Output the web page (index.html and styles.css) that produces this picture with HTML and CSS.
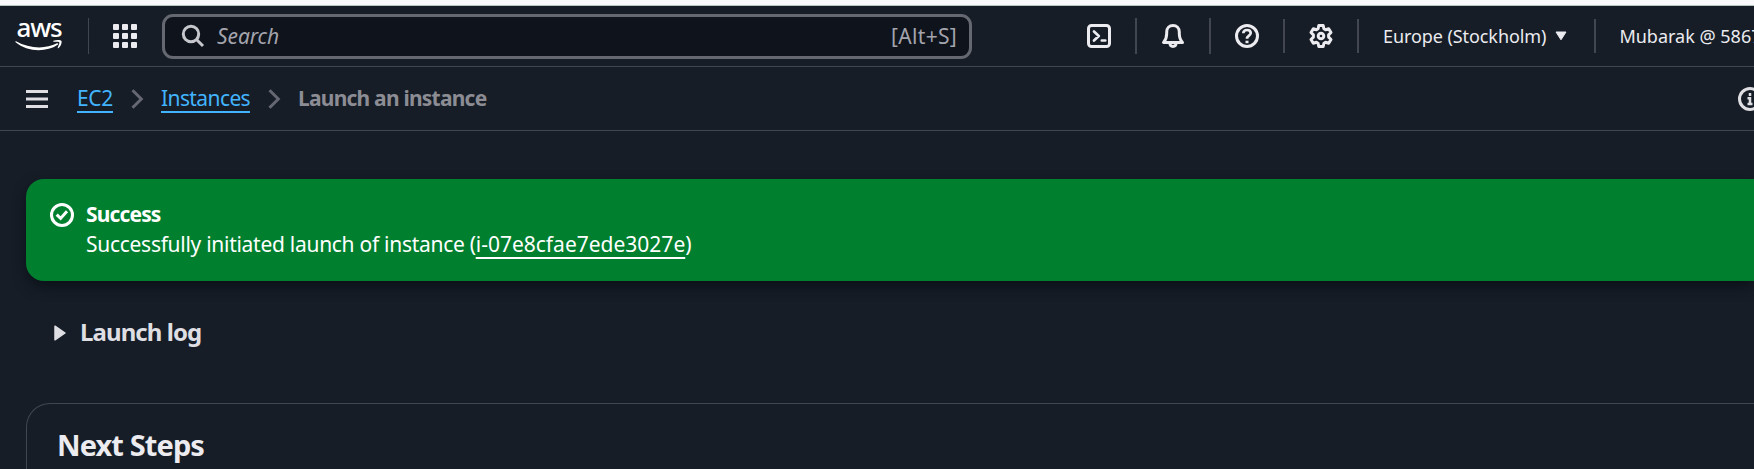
FILE: index.html
```html
<!DOCTYPE html>
<html lang="en">
<head>
<meta charset="utf-8">
<title>Launch an instance | EC2</title>
<link rel="stylesheet" href="styles.css">
</head>
<body>
<div class="browser-edge"></div>
<header class="topnav">
  <a class="logo" aria-label="AWS"><span class="logo-text">aws</span>
    <svg class="logo-smile" width="48" height="12" viewBox="0 0 48 12"><path d="M1 1.200C14 8.500 30 9.500 42 3.300C43.200 2.900 43.700 4 42.700 4.800C31 12.800 12 12 .600 2.300C0 1.600.400 .900 1 1.200Z" fill="#fff"/><path d="M38.500 .800C41 -.200 45.500 -.200 46.500 .900C47.100 3 45.500 6.500 43.300 8.300C42.700 8.500 42.500 8.200 42.800 7.500C43.700 5.300 44.800 3 44.200 2.200C43.400 1.500 40.700 1.700 38.700 1.800C38 1.800 38 1.100 38.500 .800Z" fill="#fff"/></svg>
  </a>
  <span class="rule rule-logo"></span>
  <svg class="apps" width="24" height="24" viewBox="0 0 24 24" fill="#ebebf0"><rect width="6" height="6" rx="1"/><rect x="9" width="6" height="6" rx="1"/><rect x="18" width="6" height="6" rx="1"/><rect y="9" width="6" height="6" rx="1"/><rect x="9" y="9" width="6" height="6" rx="1"/><rect x="18" y="9" width="6" height="6" rx="1"/><rect y="18" width="6" height="6" rx="1"/><rect x="9" y="18" width="6" height="6" rx="1"/><rect x="18" y="18" width="6" height="6" rx="1"/></svg>
  <div class="search">
    <svg width="24" height="24" viewBox="0 0 24 24" fill="none" stroke="#c6c6cd" stroke-width="3"><circle cx="10" cy="10" r="7.700"/><path d="M15.500 15.500L22 22"/></svg>
    <span class="search-hint">Search</span><span class="search-key">[Alt+S]</span>
  </div>
  <div class="tools">
    <span class="tool"><svg class="ico" width="24" height="24" viewBox="0 0 24 24"><rect x="1.500" y="1.500" width="21" height="21" rx="3"/><path d="M7 7.500L11.800 12L7 16.500M14.800 16.500H18.300" stroke-linecap="round" stroke-linejoin="round" stroke-width="2.700"/></svg></span>
    <span class="rule"></span>
    <span class="tool"><svg class="ico" width="24" height="24" viewBox="0 0 24 24"><path d="M2.500 18.500H21.500C19.200 16 18.300 13.500 18.300 9.500V8C18.300 4.200 15.700 1.500 12 1.500S5.700 4.200 5.700 8V9.500C5.700 13.500 4.800 16 2.500 18.500Z" stroke-linejoin="round"/><path d="M8.800 19C9 21.500 10.300 22.500 12 22.500S15 21.500 15.200 19"/></svg></span>
    <span class="rule"></span>
    <span class="tool"><svg class="ico" width="24" height="24" viewBox="0 0 24 24"><circle cx="12" cy="12" r="10.500"/><path d="M8.300 9.300C8.400 7.300 9.900 6 12 6S15.700 7.200 15.700 9.100C15.700 11.700 12 11.700 12 14.800" stroke-width="2.700"/><path d="M12 16.700V19.200"/></svg></span>
    <span class="rule short"></span>
    <span class="tool"><svg class="ico" width="24" height="24" viewBox="0 0 24 24"><path d="M9.800 1.500H14.200L14.900 4.700L16.600 5.700L19.700 4.700L22 8.500L19.600 10.900V13.100L22 15.500L19.700 19.300L16.600 18.300L14.900 19.300L14.200 22.500H9.800L9.100 19.300L7.400 18.300L4.300 19.300L2 15.500L4.400 13.100V10.900L2 8.500L4.300 4.700L7.400 5.700L9.100 4.700Z" stroke-linejoin="round"/><circle cx="12" cy="12" r="2.800"/></svg></span>
    <span class="rule short"></span>
    <span class="region">Europe (Stockholm)<svg width="12" height="10" viewBox="0 0 12 10"><path d="M1 1H11L6 8.800Z" fill="#ebebf0" stroke="#ebebf0" stroke-linejoin="round"/></svg></span>
    <span class="rule short"></span>
    <span class="account">Mubarak @ 5867</span>
  </div>
</header>
<nav class="crumbs">
  <svg class="menu" width="22" height="18" viewBox="0 0 22 18" fill="#dedee3"><path d="M0 0H22V3H0ZM0 7.500H22V10.500H0ZM0 15H22V18H0Z"/></svg>
  <a class="crumb crumb-ec2">EC2</a>
  <svg class="chev" width="13" height="20" viewBox="0 0 13 20"><path d="M1.500 1.200L10.300 10L1.500 18.800"/></svg>
  <a class="crumb crumb-inst">Instances</a>
  <svg class="chev" width="13" height="20" viewBox="0 0 13 20"><path d="M1.500 1.200L10.300 10L1.500 18.800"/></svg>
  <span class="current">Launch an instance</span>
  <svg class="info" width="24" height="24" viewBox="0 0 24 24"><circle cx="12" cy="12" r="10.500"/><path d="M12 6V9M9.500 11.300H12V17M9.500 17H14.500" stroke-width="2.500"/></svg>
</nav>
<main class="content">
  <section class="flash">
    <svg width="24" height="24" viewBox="0 0 24 24" fill="none" stroke="#fff" stroke-width="3"><circle cx="12" cy="12" r="10.500"/><path d="M6.700 11.700L10.600 15.400L17 8.300"/></svg>
    <div class="flash-body"><div class="flash-title">Success</div><div class="flash-text">Successfully initiated launch of instance (<a class="flash-link">i-07e8cfae7ede3027e</a>)</div></div>
  </section>
  <div class="log"><svg width="12" height="16" viewBox="0 0 12 16"><path d="M1 1.200L11 8L1 14.800Z" fill="#dedee3" stroke="#dedee3" stroke-width="1.500" stroke-linejoin="round"/></svg><span class="log-title">Launch log</span></div>
  <section class="panel"><h2 class="panel-title">Next Steps</h2></section>
</main>
</body>
</html>
```
FILE: styles.css
```css
* { box-sizing: border-box; }
html { overflow: hidden; }
body { margin: 0; width: 1754px; height: 469px; display: flex; flex-direction: column; overflow: hidden; background: #161d26; color: #dedee3; font-family: "Noto Sans", "Open Sans", sans-serif; font-size: 21px; white-space: nowrap; }
svg { display: block; flex: none; }
.browser-edge { height: 6px; flex: none; background: #f9f9fb; border-bottom: 1px solid #b9c6bd; }
.topnav { display: flex; align-items: center; height: 61px; flex: none; border-bottom: 1px solid #424650; }
.logo { width: 48px; flex: none; margin-left: 15px; display: flex; flex-direction: column; align-items: center; color: #fff; }
.logo-text { font-size: 26px; line-height: 12px; height: 20px; font-weight: 500; letter-spacing: -1.2px; }
.logo-smile { margin-top: -1px; }
.rule { width: 2px; height: 36px; background: #424650; flex: none; }
.rule.short { height: 34px; }
.rule-logo { width: 1px; margin-left: 25px; }
.apps { margin-left: 24px; }
.search { width: 810px; height: 45px; flex: none; margin-left: 25px; border: 3px solid #656871; border-radius: 11px; background: #0f141c; display: flex; align-items: center; padding: 0 12px 0 16px; color: #a4a4ad; }
.search-hint, .search-key { padding-bottom: 1px; }
.search-hint { font-style: italic; margin-left: 12px; letter-spacing: -0.1px; }
.search-key { margin-left: auto; letter-spacing: 0.3px; }
.tools { display: flex; align-items: center; margin-left: 91px; font-size: 18px; color: #ebebf0; flex: 1; min-width: 0; }
.tool { width: 72px; flex: none; display: flex; justify-content: center; }
.ico { fill: none; stroke: #ebebf0; stroke-width: 3; }
.region { display: flex; align-items: center; gap: 9px; padding: 0 27px 0 24px; letter-spacing: -0.08px; }
.account { padding-left: 23px; }
.crumbs { display: flex; align-items: center; height: 64px; flex: none; border-bottom: 1px solid #424650; }
.menu { margin-left: 26px; }
.crumb { color: #42b4ff; line-height: 26px; border-bottom: 2px solid #42b4ff; }
.crumb-ec2 { width: 36px; margin-left: 29px; letter-spacing: -0.35px; }
.crumb-inst { width: 89px; letter-spacing: -0.6px; }
.chev { fill: none; stroke: #656871; stroke-width: 3; margin: 0 17px 0 18px; }
.current { color: #8c8c94; font-weight: 700; letter-spacing: -0.78px; padding-bottom: 1px; }
.info { fill: none; stroke: #dedee3; stroke-width: 3; margin-left: auto; margin-right: -8px; }
.content { flex: 1; min-height: 0; display: flex; flex-direction: column; padding: 48px 0 0 26px; }
.flash { height: 102px; flex: none; background: #00802f; border-radius: 18px 0 0 18px; color: #fff; display: flex; padding: 24px; gap: 12px; box-shadow: 0 6px 14px -1px #0b1018; }
.flash-title { font-weight: 700; line-height: 23px; letter-spacing: -0.85px; }
.flash-text { line-height: 30px; margin-top: 3px; letter-spacing: -0.28px; }
.flash-link { letter-spacing: 0; text-decoration: underline; text-decoration-thickness: 2px; text-underline-offset: 5px; text-decoration-skip-ink: none; }
.log { display: flex; align-items: center; height: 36px; flex: none; margin-top: 34px; padding-left: 28px; font-size: 24px; font-weight: 700; letter-spacing: -0.92px; gap: 14px; }
.log-title { line-height: 34px; padding-bottom: 2px; }
.panel { margin-top: 52px; flex: 1; border: 1px solid #424650; border-width: 1px 0 0 1px; border-radius: 24px 0 0 0; padding: 23px 31px 0 30px; }
.panel-title { margin: 0; font-size: 29px; line-height: 36px; letter-spacing: -0.9px; color: #ebebf0; }
```
